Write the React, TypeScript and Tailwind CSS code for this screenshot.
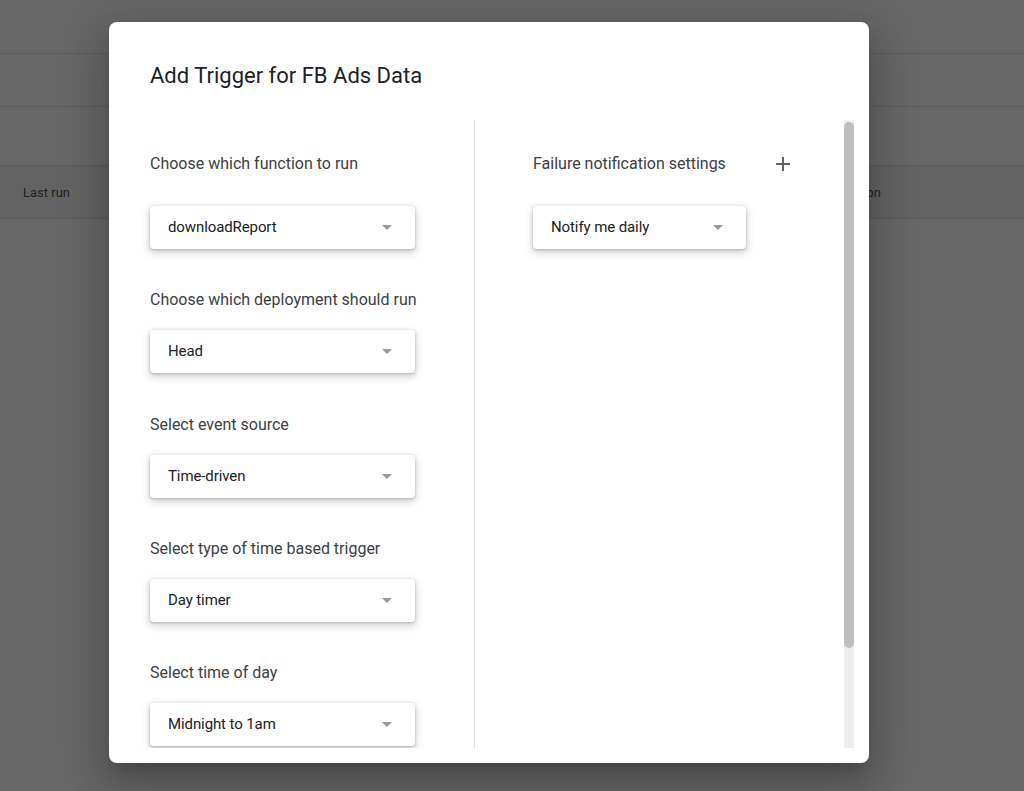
import React from "react";

function Arrow() {
  return (
    <svg width="10" height="5" viewBox="0 0 10 5" className="shrink-0">
      <path d="M0 0 L10 0 L5 5 Z" fill="#9a9a9a" />
    </svg>
  );
}

function Select({ value, width }: { value: string; width: string }) {
  return (
    <div
      className={`${width} h-[43px] bg-white rounded-[4px] flex items-center justify-between pl-[18px] pr-[23px] shadow-[0_1px_3px_0_rgba(60,64,67,0.3),0_3px_7px_2px_rgba(60,64,67,0.17)]`}
    >
      <span className="text-[15px] leading-[20px] text-[#202124] tracking-[-0.1px] -mt-[1px]">{value}</span>
      <Arrow />
    </div>
  );
}

function Label({ children }: { children: React.ReactNode }) {
  return <div className="text-[16px] leading-[20px] text-[#3c4043] whitespace-nowrap">{children}</div>;
}

export default function App() {
  return (
    <div
      className="relative w-[1024px] h-[791px] overflow-hidden bg-[#666666]"
      style={{ fontFamily: "Roboto, 'Liberation Sans', sans-serif" }}
    >
      {/* dimmed page behind */}
      <div className="flex flex-col">
        <div className="h-[54px] border-b border-[#5b5b5b]" />
        <div className="h-[53px] border-b border-[#5b5b5b]" />
        <div className="h-[59px] border-b border-[#5b5b5b]" />
        <div className="h-[53px] border-b border-[#5b5b5b] bg-[#636363] grid grid-cols-[832px_1fr] items-center pt-[2px]">
          <span className="pl-[23px] text-[13px] text-[#1f1f1f]">Last run</span>
          <span className="text-[13px] text-[#1f1f1f]">Duration</span>
        </div>
      </div>

      {/* dialog */}
      <div className="absolute left-[109px] top-[22px] w-[760px] h-[741px] bg-white rounded-[8px] shadow-[0_11px_15px_-7px_rgba(0,0,0,0.2),0_24px_38px_3px_rgba(0,0,0,0.14),0_9px_46px_8px_rgba(0,0,0,0.12)] flex flex-col">
        <div className="h-[98px] pl-[41px] pt-[40px]">
          <div className="text-[22px] leading-[28px] text-[#202124]">Add Trigger for FB Ads Data</div>
        </div>
        <div className="h-[628px] flex pl-[41px] overflow-hidden">
          <div className="w-[265px] shrink-0 flex flex-col pt-[34px]">
            <Label>Choose which function to run</Label>
            <div className="mt-[32px]">
              <Select value="downloadReport" width="w-[265px]" />
            </div>
            <div className="mt-[41px]">
              <Label>Choose which deployment should run</Label>
            </div>
            <div className="mt-[20px]">
              <Select value="Head" width="w-[265px]" />
            </div>
            <div className="mt-[42px]">
              <Label>Select event source</Label>
            </div>
            <div className="mt-[20px]">
              <Select value="Time-driven" width="w-[265px]" />
            </div>
            <div className="mt-[41px]">
              <Label>Select type of time based trigger</Label>
            </div>
            <div className="mt-[20px]">
              <Select value="Day timer" width="w-[265px]" />
            </div>
            <div className="mt-[41px]">
              <Label>Select time of day</Label>
            </div>
            <div className="mt-[20px]">
              <Select value="Midnight to 1am" width="w-[265px]" />
            </div>
          </div>
          <div className="ml-[59px] w-px bg-[#dadce0] shrink-0" />
          <div className="ml-[58px] flex-1 flex flex-col pt-[34px]">
            <div className="w-[258px] h-[20px] flex items-center justify-between">
              <Label>Failure notification settings</Label>
              <svg width="16" height="16" viewBox="0 0 16 16" className="shrink-0">
                <path d="M8 1 V15 M1 8 H15" stroke="#5f6368" strokeWidth="2" fill="none" />
              </svg>
            </div>
            <div className="mt-[32px]">
              <Select value="Notify me daily" width="w-[213px]" />
            </div>
          </div>
          <div className="w-[10px] shrink-0 mr-[15px] bg-[#eeeeee] flex flex-col pt-[2px]">
            <div className="h-[526px] w-full bg-[#bdbdbd] rounded-full" />
          </div>
        </div>
      </div>
    </div>
  );
}
